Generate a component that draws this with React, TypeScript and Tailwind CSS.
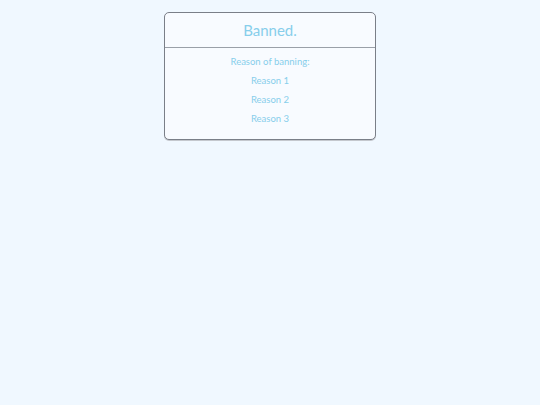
export default function App() {
  const reasons = ["Reason 1", "Reason 2", "Reason 3"];

  return (
    <div className="min-h-[405px] w-full bg-[#f0f8ff] pt-3 font-['Lato','Open_Sans',sans-serif]">
      <div className="mx-auto w-[212px] rounded-[5px] border border-[#7a7f88] bg-[#f8fbff] text-[#87ceeb] shadow-[0_1px_0_#c4c8ce]">
        {/* Header */}
        <div className="flex h-[35px] items-center justify-center border-b border-[#9aa0a8]">
          <h1 className="text-[15px] leading-none">Banned.</h1>
        </div>

        {/* Reasons */}
        <div className="flex flex-col items-center gap-[9px] pt-[9px] pb-[15px] text-[9.5px] leading-[10px]">
          <p>Reason of banning:</p>
          {reasons.map((r) => (
            <p key={r}>{r}</p>
          ))}
        </div>
      </div>
    </div>
  );
}
